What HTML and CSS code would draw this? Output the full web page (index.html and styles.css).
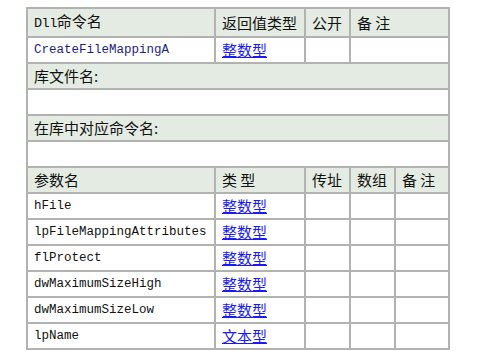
FILE: index.html
```html
<!DOCTYPE html>
<html lang="zh-CN">
<head>
<meta charset="utf-8">
<title>CreateFileMappingA</title>
<link rel="stylesheet" href="styles.css">
</head>
<body>
<div class="wrap">
<table class="api">
  <colgroup>
    <col class="c1"><col class="c2"><col class="c3"><col class="c4"><col class="c5">
  </colgroup>
  <tr class="head">
    <td><span class="asc">Dll</span>命令名</td>
    <td>返回值类型</td>
    <td>公开</td>
    <td colspan="2">备 注</td>
  </tr>
  <tr>
    <td class="code navy">CreateFileMappingA</td>
    <td><a href="#">整数型</a></td>
    <td></td>
    <td colspan="2"></td>
  </tr>
  <tr class="head"><td colspan="5">库文件名:</td></tr>
  <tr><td colspan="5"></td></tr>
  <tr class="head"><td colspan="5">在库中对应命令名:</td></tr>
  <tr><td colspan="5"></td></tr>
  <tr class="head">
    <td>参数名</td>
    <td>类 型</td>
    <td>传址</td>
    <td>数组</td>
    <td>备 注</td>
  </tr>
  <tr><td class="code">hFile</td><td><a href="#">整数型</a></td><td></td><td></td><td></td></tr>
  <tr><td class="code">lpFileMappingAttributes</td><td><a href="#">整数型</a></td><td></td><td></td><td></td></tr>
  <tr><td class="code">flProtect</td><td><a href="#">整数型</a></td><td></td><td></td><td></td></tr>
  <tr><td class="code">dwMaximumSizeHigh</td><td><a href="#">整数型</a></td><td></td><td></td><td></td></tr>
  <tr><td class="code">dwMaximumSizeLow</td><td><a href="#">整数型</a></td><td></td><td></td><td></td></tr>
  <tr><td class="code">lpName</td><td><a href="#">文本型</a></td><td></td><td></td><td></td></tr>
</table>
</div>
</body>
</html>
```
FILE: styles.css
```css
html, body {
  margin: 0;
  padding: 0;
  background: #ffffff;
}
.wrap {
  padding: 7px 0 0 26px;
}
.api {
  border-collapse: collapse;
  table-layout: fixed;
  width: 422px;
  border: 2px solid #acacac;
  font-family: "Noto Sans CJK SC", "Liberation Mono", sans-serif;
  font-size: 15px;
  color: #111;
}
.c1 { width: 188px; }
.c2 { width: 90px; }
.c3 { width: 45px; }
.c4 { width: 45px; }
.c5 { width: 54px; }
.api td {
  border: 2px solid #b2b2b2;
  height: 24px;
  padding: 0 0 0 6px;
  line-height: 24px;
  white-space: nowrap;
  overflow: hidden;
  vertical-align: middle;
}
.head td {
  background: #e4ebe2;
}
.asc, .code {
  font-family: "Liberation Mono", monospace;
  font-size: 12.5px;
}
.asc {
  font-size: 13.5px;
  letter-spacing: -0.5px;
}
.navy {
  color: #1c1c8a;
}
.api a {
  color: #1a1af5;
  text-decoration: underline;
}
```
